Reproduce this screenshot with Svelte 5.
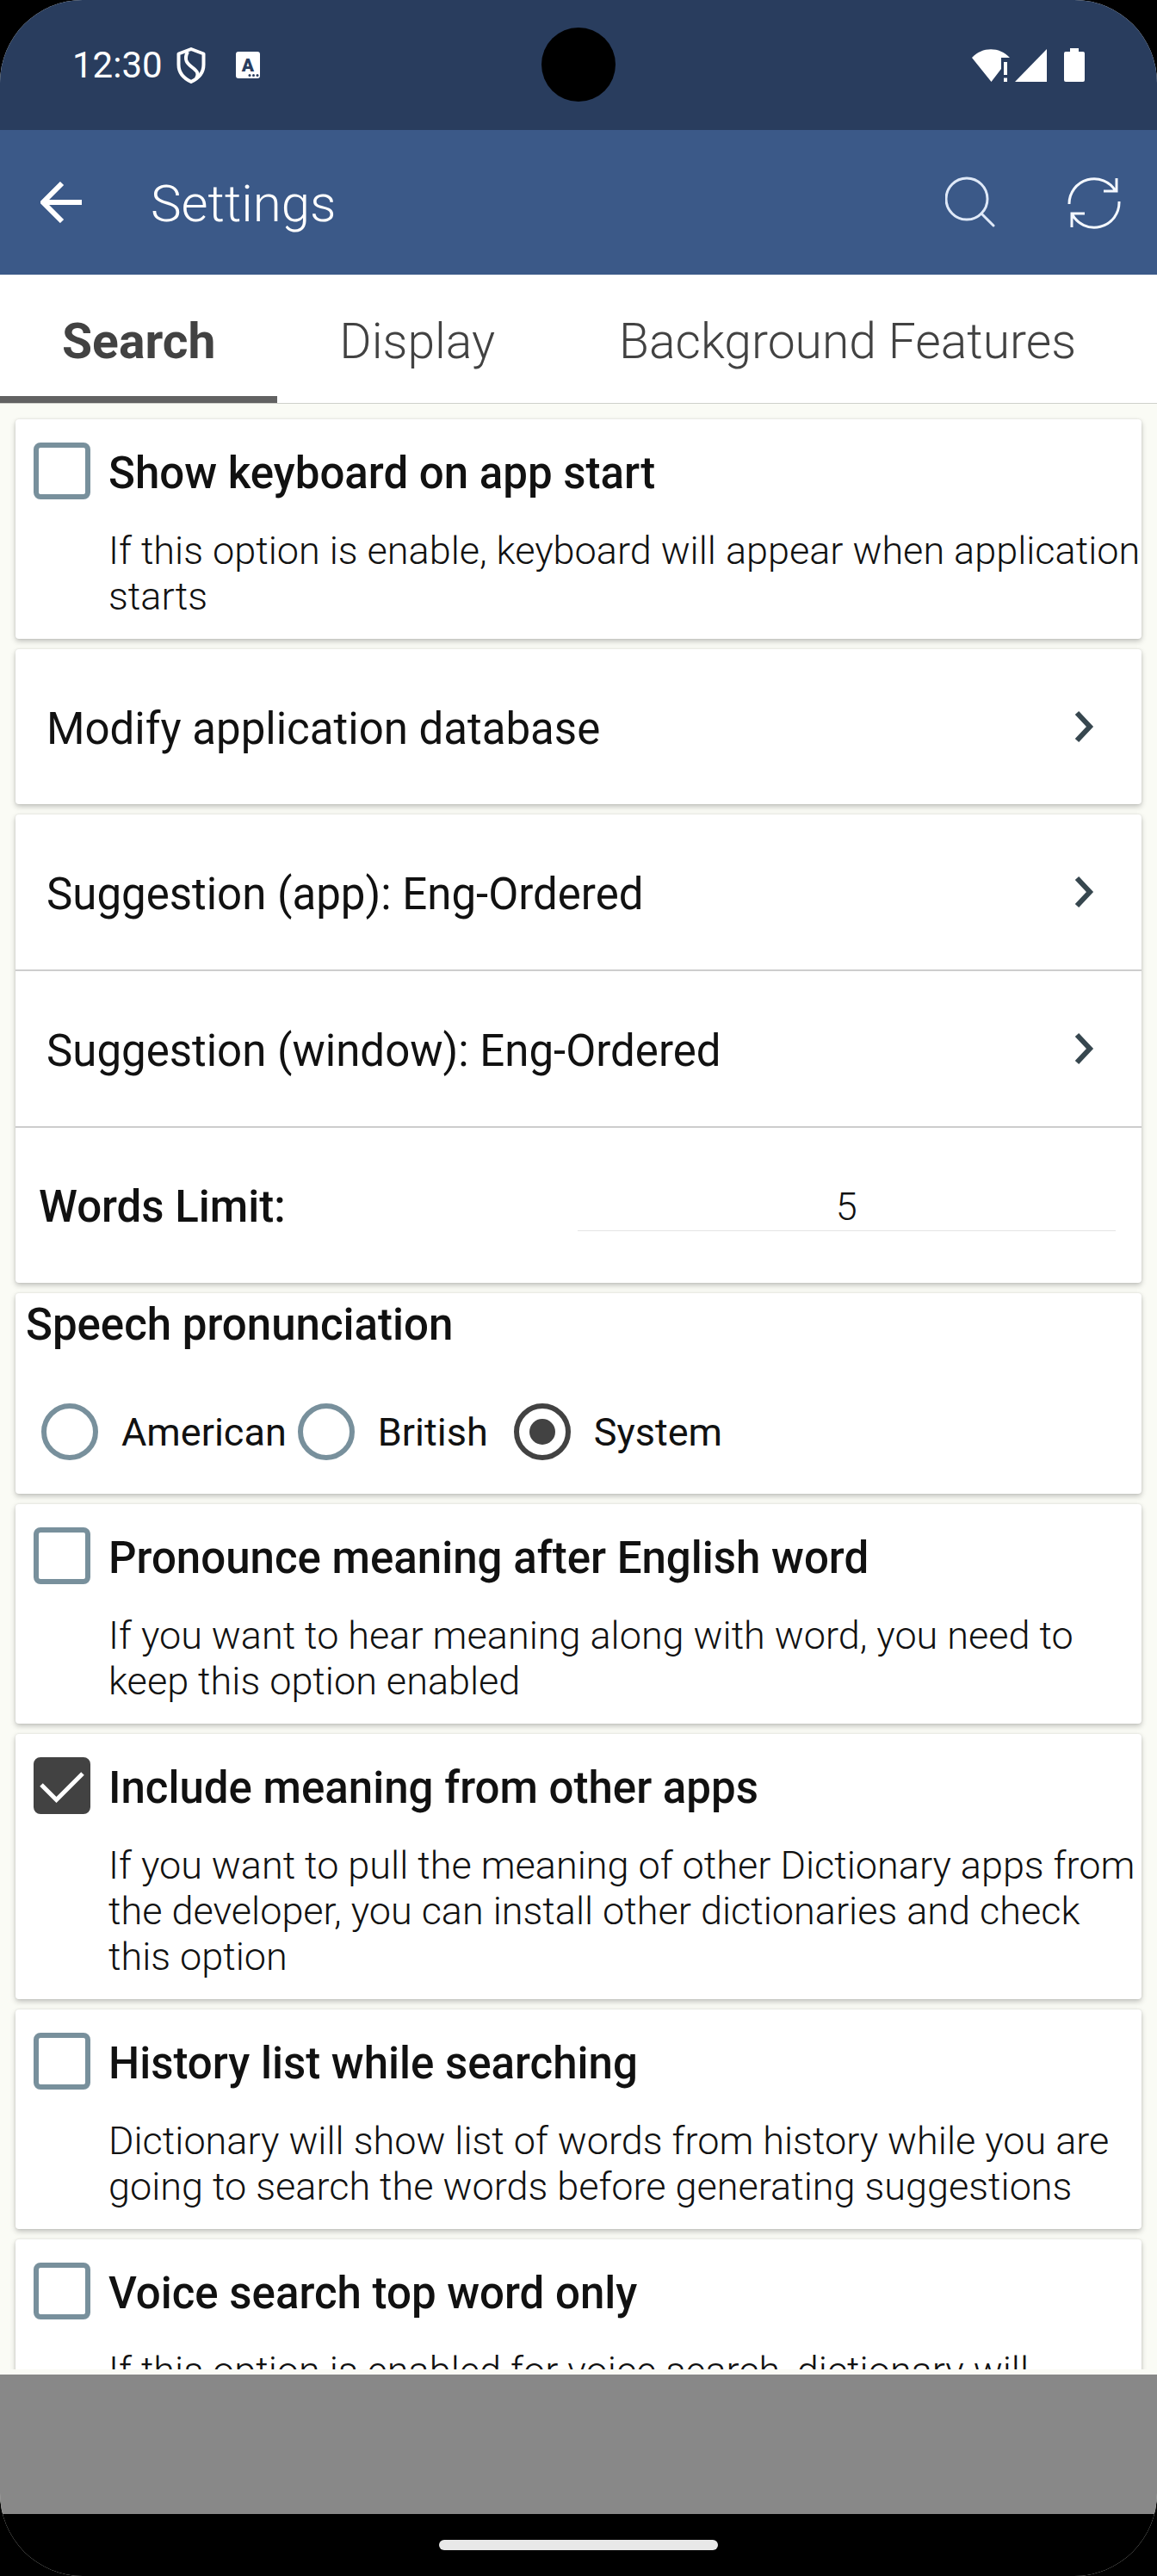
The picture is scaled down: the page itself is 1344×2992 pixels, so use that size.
<script lang="ts">
  type Option = {
    id: string;
    title: string;
    description: string;
    checked: boolean;
  };

  const tabs = ['Search', 'Display', 'Background Features'];
  const voices = ['American', 'British', 'System'];

  let activeTab = $state('Search');
  let voice = $state('System');
  let wordsLimit = $state('5');

  let keyboard: Option[] = $state([
    {
      id: 'keyboard',
      title: 'Show keyboard on app start',
      description: 'If this option is enable, keyboard will appear when application starts',
      checked: false
    }
  ]);

  let options: Option[] = $state([
    {
      id: 'pronounce',
      title: 'Pronounce meaning after English word',
      description: 'If you want to hear meaning along with word, you need to keep this option enabled',
      checked: false
    },
    {
      id: 'include',
      title: 'Include meaning from other apps',
      description:
        'If you want to pull the meaning of other Dictionary apps from the developer, you can install other dictionaries and check this option',
      checked: true
    },
    {
      id: 'history',
      title: 'History list while searching',
      description:
        'Dictionary will show list of words from history while you are going to search the words before generating suggestions',
      checked: false
    },
    {
      id: 'voice',
      title: 'Voice search top word only',
      description: 'If this option is enabled for voice search, dictionary will',
      checked: false
    }
  ]);
</script>

{#snippet optionCard(option: Option)}
  <section class="card option">
    <span class="tick">
      <input type="checkbox" id={option.id} bind:checked={option.checked} />
      {#if option.checked}
        <svg viewBox="0 0 66 66" aria-hidden="true">
          <path d="M9 32 26.500 49.500 57 19" fill="none" stroke="#fff" stroke-width="5" />
        </svg>
      {/if}
    </span>
    <label class="title" for={option.id}>{option.title}</label>
    <p class="description">{option.description}</p>
  </section>
{/snippet}

{#snippet linkRow(text: string)}
  <button class="row" type="button">
    <span class="row__text">{text}</span>
    <svg class="chevron" viewBox="0 0 24 38" aria-hidden="true">
      <path d="M3 3 18 19 3 35" fill="none" stroke="#37474f" stroke-width="6" />
    </svg>
  </button>
{/snippet}

<div class="screen">
  <div class="status">
    <span class="status__time">12:30</span>
    <svg class="shield" viewBox="0 0 34 42" aria-hidden="true">
      <g fill="none" stroke="#fff" stroke-width="4" stroke-linejoin="round">
        <path d="M17 2 31.500 7.500V20c0 9-6 16-14.500 20C8.500 36 2.500 29 2.500 20V7.500z" />
        <path d="M13 5C8 15 13 19 18 23s9 7 5 13" />
      </g>
    </svg>
    <svg class="badge" viewBox="0 0 28 31" aria-hidden="true">
      <rect width="28" height="31" rx="3" fill="#fff" />
      <text x="14" y="23" text-anchor="middle" font-size="21" font-weight="900" fill="#293d5e">A</text>
      <circle cx="16" cy="27.500" r="1.500" fill="#293d5e" />
      <circle cx="20.500" cy="27.500" r="1.500" fill="#293d5e" />
      <circle cx="25" cy="27.500" r="1.500" fill="#293d5e" />
    </svg>
    <span class="camera"></span>
    <span class="status__right">
      <svg class="wifi" viewBox="0 0 44 38" aria-hidden="true">
        <path d="M0 10C12-3 32-3 44 10H34V23L22.500 38z" fill="#fff" />
        <path d="M37 15h4v15h-4zM37 33.500h4V38h-4z" fill="#fff" />
      </svg>
      <svg class="signal" viewBox="0 0 37 38" aria-hidden="true">
        <path d="M37 0V38H0z" fill="#fff" />
      </svg>
      <svg class="battery" viewBox="0 0 24 39" aria-hidden="true">
        <path d="M7 0h10v4h5q2 0 2 2v31q0 2-2 2H2q-2 0-2-2V6q0-2 2-2h5z" fill="#fff" />
      </svg>
    </span>
  </div>

  <header class="appbar">
    <button class="icon" type="button" aria-label="Back">
      <svg class="icon__back" viewBox="0 0 48 48" aria-hidden="true">
        <path d="M48 24H5M25 2 3 24l22 22" fill="none" stroke="#fff" stroke-width="6" />
      </svg>
    </button>
    <h1>Settings</h1>
    <button class="icon" type="button" aria-label="Search">
      <svg class="icon__action" viewBox="0 0 62 62" aria-hidden="true">
        <g fill="none" stroke="#dfe9f8" stroke-width="3" stroke-linecap="round">
          <circle cx="25" cy="27" r="24" />
          <path d="M42 44 56 58" />
        </g>
      </svg>
    </button>
    <button class="icon" type="button" aria-label="Refresh">
      <svg class="icon__action" viewBox="0 0 62 62" aria-hidden="true">
        <g fill="none" stroke="#f4f8ff" stroke-width="3">
          <path d="M2 33A29 29 0 0 1 56 18M42 18h15V3" />
          <path d="M60 30A29 29 0 0 1 5 44M20 44H5v16" />
        </g>
      </svg>
    </button>
  </header>

  <div class="tabs" role="tablist">
    {#each tabs as tab}
      <button
        class="tab"
        class:tab--active={tab === activeTab}
        type="button"
        role="tab"
        aria-selected={tab === activeTab}
        onclick={() => (activeTab = tab)}
      >
        {tab}
      </button>
    {/each}
  </div>

  <main class="list">
    {#each keyboard as option (option.id)}
      {@render optionCard(option)}
    {/each}

    <section class="card">
      {@render linkRow('Modify application database')}
    </section>

    <section class="card">
      {@render linkRow('Suggestion (app): Eng-Ordered')}
      {@render linkRow('Suggestion (window): Eng-Ordered')}
      <div class="row limit">
        <label class="title" for="limit">Words Limit:</label>
        <input id="limit" type="text" inputmode="numeric" bind:value={wordsLimit} />
      </div>
    </section>

    <section class="card speech">
      <h2 class="title">Speech pronunciation</h2>
      <div class="voices" role="radiogroup" aria-label="Speech pronunciation">
        {#each voices as name}
          <label class="voice">
            <input type="radio" name="voice" value={name} bind:group={voice} />
            <span>{name}</span>
          </label>
        {/each}
      </div>
    </section>

    {#each options as option (option.id)}
      {@render optionCard(option)}
    {/each}
  </main>

  <div class="banner"></div>
  <div class="gesture"><span></span></div>
</div>

<style>
  :global(body) {
    background: #000;
  }

  .screen {
    height: 100vh;
    display: flex;
    flex-direction: column;
    overflow: hidden;
    border-radius: 96px;
    background: #fafbf5;
    color: #111;
    font-family: Roboto, 'Noto Sans', sans-serif;
  }

  button,
  input {
    margin: 0;
    border: 0;
    padding: 0;
    background: none;
    color: inherit;
    font-family: inherit;
  }

  h1,
  h2,
  p {
    margin: 0;
  }

  svg {
    display: block;
    flex: none;
  }

  .status {
    position: relative;
    flex: none;
    display: flex;
    align-items: center;
    height: 151px;
    padding: 0 84px;
    background: #293d5e;
    color: #fff;
  }

  .status__time {
    font-size: 42px;
    line-height: 50px;
  }

  .shield {
    width: 34px;
    height: 42px;
    margin-left: 16px;
  }

  .badge {
    width: 28px;
    height: 31px;
    margin-left: 35px;
  }

  .camera {
    position: absolute;
    top: 32px;
    left: 50%;
    width: 86px;
    height: 86px;
    border-radius: 50%;
    background: #000;
    transform: translateX(-50%);
  }

  .status__right {
    display: flex;
    align-items: center;
    margin-left: auto;
  }

  .wifi {
    width: 44px;
    height: 38px;
  }

  .signal {
    width: 37px;
    height: 38px;
    margin: 0 20px 0 6px;
  }

  .battery {
    width: 24px;
    height: 39px;
  }

  .appbar {
    flex: none;
    display: flex;
    align-items: center;
    gap: 80px;
    height: 168px;
    padding: 0 42px 0 47px;
    background: #3b5988;
    color: #fff;
  }

  h1 {
    flex: 1;
    padding-top: 4px;
    font-size: 60px;
    font-weight: 300;
    line-height: 72px;
  }

  .icon__back {
    width: 48px;
    height: 48px;
  }

  .icon__action {
    width: 62px;
    height: 62px;
  }

  .tabs {
    flex: none;
    display: flex;
    height: 149px;
    border-bottom: 1px solid #cfd1cb;
    background: #fff;
  }

  .tab {
    border-bottom: 8px solid transparent;
    padding: 14px 72px 0;
    color: #424242;
    font-size: 57px;
    font-weight: 300;
    white-space: nowrap;
  }

  .tab--active {
    border-color: #626262;
    font-weight: 700;
  }

  .list {
    flex: 1;
    min-height: 0;
    display: flex;
    flex-direction: column;
    gap: 12px;
    padding: 18px 18px 0;
    overflow-y: auto;
    scrollbar-width: none;
  }

  .card {
    flex: none;
    border-radius: 4px;
    background: #fff;
    box-shadow:
      0 3px 6px rgb(0 0 0 / 22%),
      0 0 3px rgb(0 0 0 / 10%);
  }

  .title {
    font-size: 51px;
    font-weight: 500;
    line-height: 60px;
  }

  .option {
    display: grid;
    grid-template-columns: 66px 1fr;
    column-gap: 21px;
    row-gap: 33px;
    align-items: end;
    padding: 27px 0 23px 21px;
  }

  .tick {
    display: grid;
    width: 66px;
    height: 66px;
  }

  .tick > * {
    grid-area: 1 / 1;
    width: 100%;
    height: 100%;
    pointer-events: none;
  }

  .tick input {
    appearance: none;
    box-sizing: border-box;
    border: 6px solid #78909c;
    border-radius: 8px;
    pointer-events: auto;
  }

  .tick input:checked {
    border-color: #424242;
    background: #424242;
  }

  .description {
    grid-column: 2;
    font-size: 45px;
    font-weight: 300;
    line-height: 53px;
  }

  .row {
    display: flex;
    align-items: center;
    justify-content: space-between;
    width: 100%;
    height: 180px;
    padding: 0 54px 0 36px;
    text-align: left;
  }

  .row:not(:last-child) {
    box-sizing: content-box;
    width: auto;
    min-width: calc(100% - 90px);
    border-bottom: 2px solid #cdcdcd;
  }

  .row__text {
    padding-top: 6px;
    font-size: 51px;
    line-height: 60px;
  }

  .chevron {
    width: 24px;
    height: 38px;
  }

  .limit {
    box-sizing: border-box;
    padding: 4px 30px 0 27px;
  }

  .limit input {
    width: 50%;
    box-sizing: border-box;
    height: 56px;
    border-bottom: 1px solid #e4e4e4;
    font-size: 45px;
    font-weight: 300;
    text-align: center;
  }

  .speech {
    padding: 7px 12px 39px;
  }

  .voices {
    display: flex;
    margin-top: 61px;
    padding-left: 18px;
  }

  .voice {
    box-sizing: border-box;
    display: flex;
    align-items: center;
    gap: 27px;
    min-width: 251px;
    padding-right: 13px;
    font-size: 45px;
    line-height: 53px;
  }

  .voice input {
    appearance: none;
    flex: none;
    box-sizing: border-box;
    display: grid;
    place-items: center;
    width: 66px;
    height: 66px;
    border: 6px solid #78909c;
    border-radius: 50%;
  }

  .voice input:checked {
    border-color: #424242;
  }

  .voice input:checked::before {
    content: '';
    width: 30px;
    height: 30px;
    border-radius: 50%;
    background: #424242;
  }

  .banner {
    flex: none;
    height: 162px;
    border-top: 6px solid #fafbf5;
    background: #888;
  }

  .gesture {
    flex: none;
    display: grid;
    place-items: center;
    height: 72px;
    background: #000;
  }

  .gesture span {
    width: 324px;
    height: 12px;
    border-radius: 6px;
    background: #e8e8e8;
  }
</style>
